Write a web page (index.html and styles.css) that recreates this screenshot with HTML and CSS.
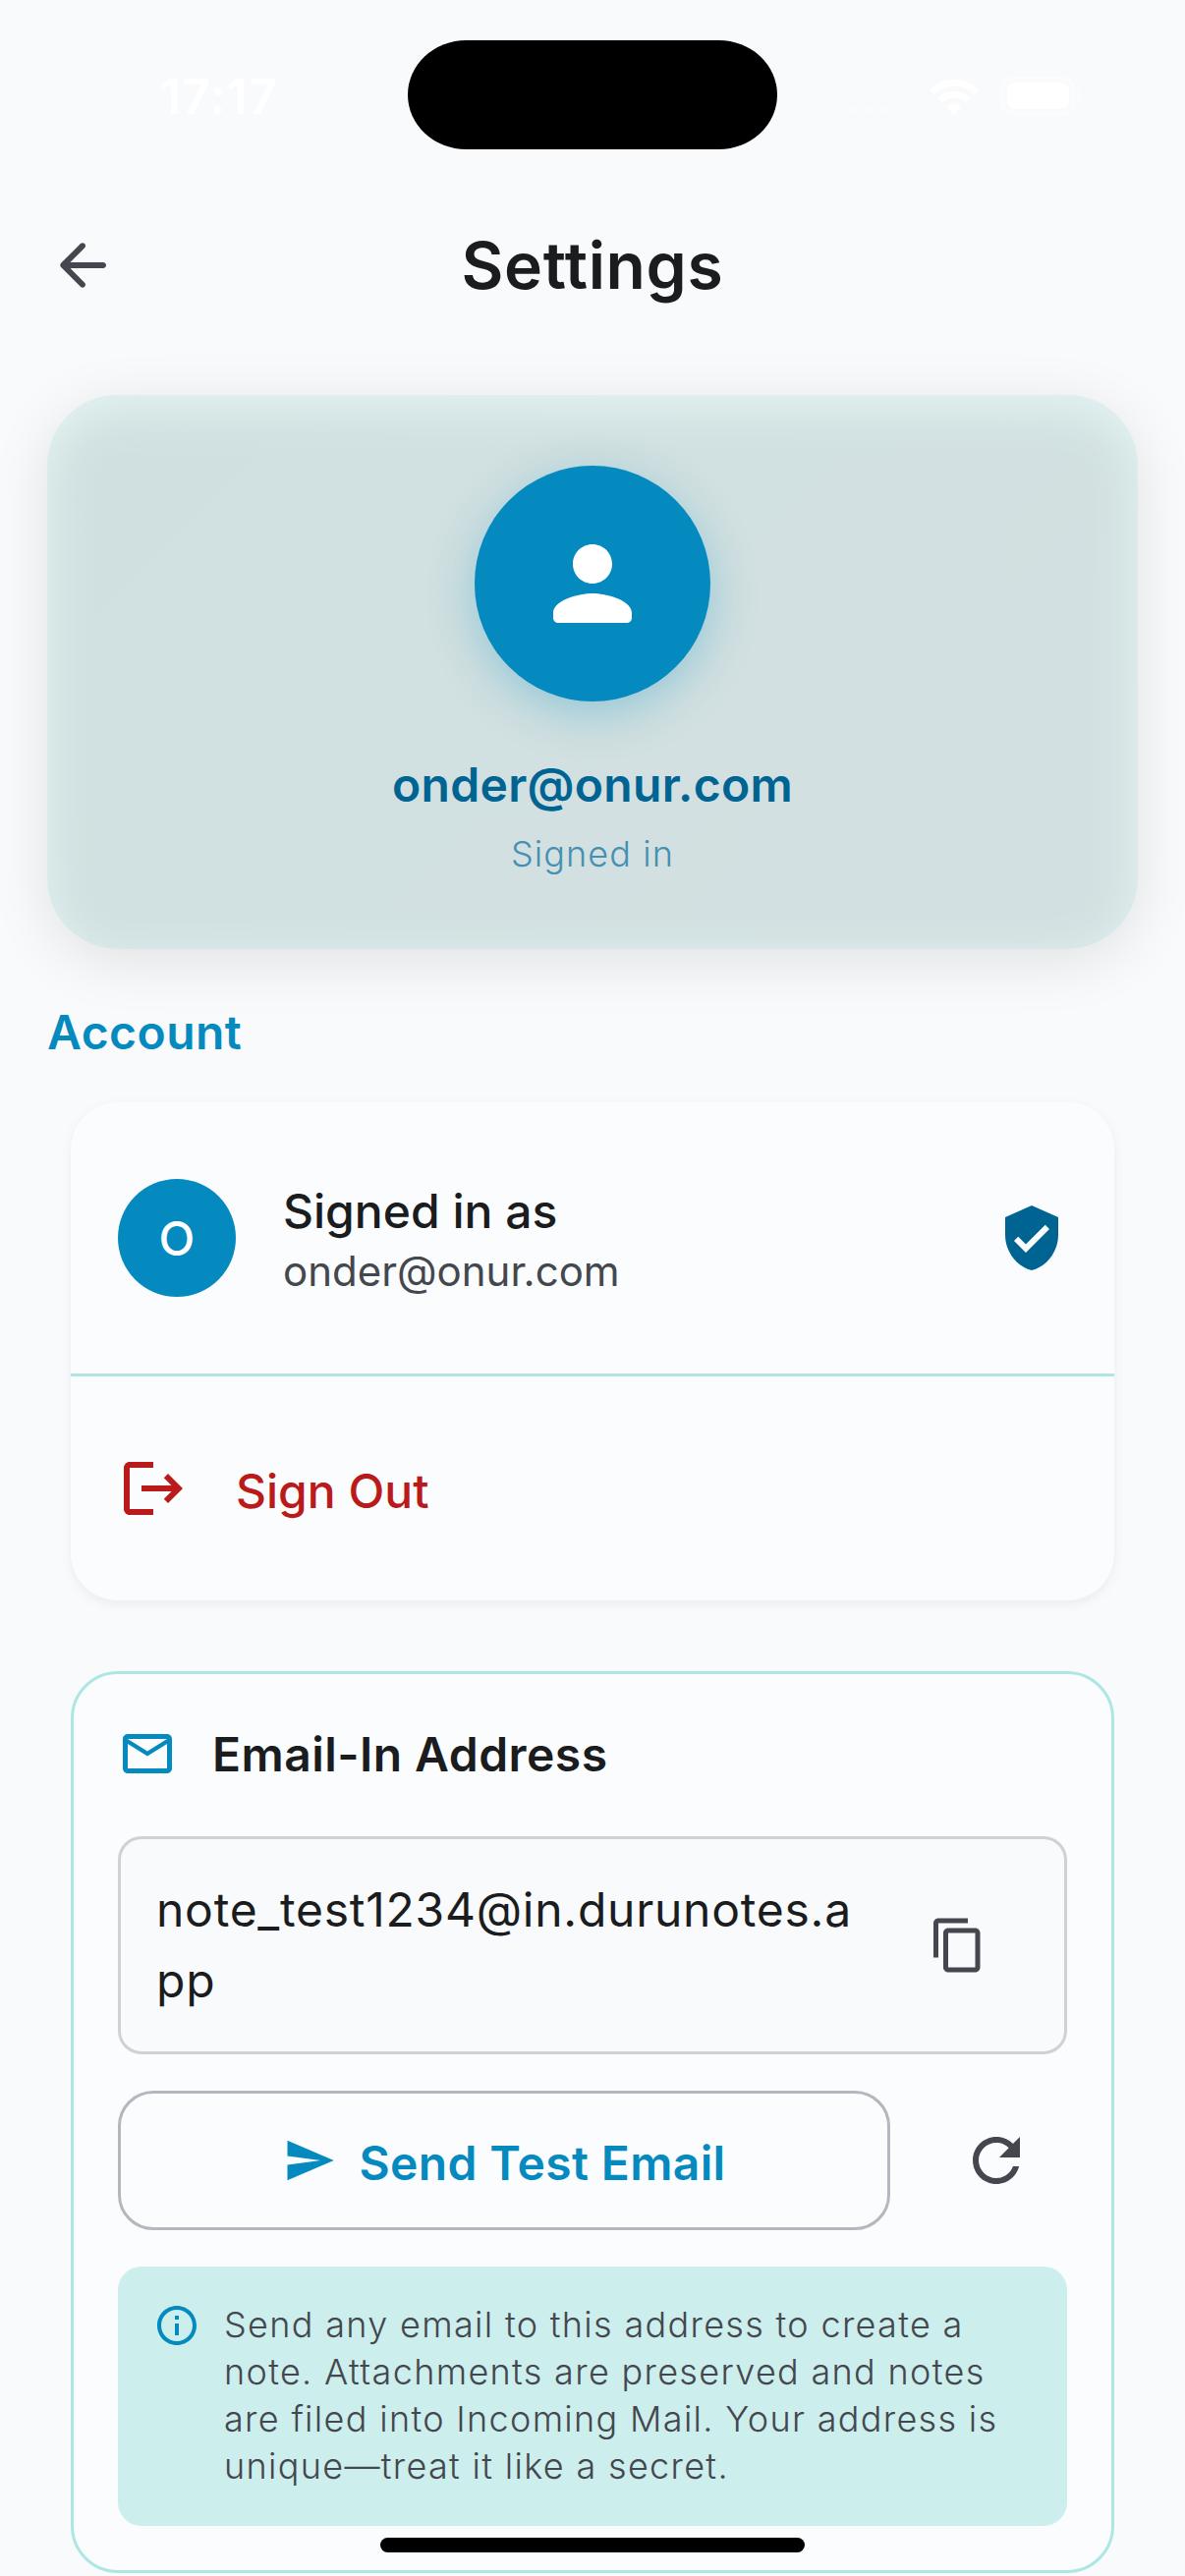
FILE: index.html
```html
<!DOCTYPE html>
<html lang="en">
<head>
<meta charset="utf-8">
<title>Settings</title>
<link rel="stylesheet" href="styles.css">
</head>
<body>
<div class="screen">
  <header class="status-bar">
    <span class="time">17:17</span>
    <span class="island"></span>
    <span class="indicators">
      <svg class="signal" viewBox="0 0 60 10"><circle cx="5" cy="5" r="4"/><circle cx="21" cy="5" r="4"/><circle cx="38" cy="5" r="4"/><circle cx="55" cy="5" r="4"/></svg>
      <svg class="wifi" viewBox="0 0 50 37"><path d="M25 37l-7.500-8c4-4 11-4 15 0z"/><path d="M8.500 19.500a23.500 23.500 0 0 1 33 0l-4.500 5a17 17 0 0 0-24 0z"/><path d="M0 11a35.500 35.500 0 0 1 50 0l-4.500 5a29 29 0 0 0-41 0z"/></svg>
      <svg class="battery" viewBox="0 0 82 39"><rect class="battery-outline" x="1.500" y="1.500" width="72" height="36" rx="11"/><rect x="6" y="6" width="63" height="27" rx="8"/><path class="battery-cap" d="M77 13q4 2 4 6.500t-4 6.500z"/></svg>
    </span>
  </header>

  <nav class="app-bar">
    <svg class="icon-24" viewBox="0 0 24 24"><path d="M19 11H7.830l4.880-4.880c.39-.39.39-1.030 0-1.420-.39-.39-1.020-.39-1.410 0l-6.590 6.590c-.39.39-.39 1.020 0 1.410l6.590 6.590c.39.39 1.020.39 1.410 0 .39-.39.39-1.020 0-1.410L7.830 13H19c.55 0 1-.45 1-1s-.45-1-1-1z"/></svg>
    <h1 class="app-title">Settings</h1>
  </nav>

  <main class="content">
    <section class="profile">
      <div class="profile-avatar">
        <svg class="icon-40" viewBox="0 0 24 24"><path d="M12 12c2.210 0 4-1.790 4-4s-1.790-4-4-4-4 1.790-4 4 1.790 4 4 4zm0 2c-2.670 0-8 1.340-8 4v1c0 .55.45 1 1 1h14c.55 0 1-.45 1-1v-1c0-2.660-5.330-4-8-4z"/></svg>
      </div>
      <div class="profile-email">onder@onur.com</div>
      <div class="profile-state">Signed in</div>
    </section>

    <h2 class="section-title">Account</h2>

    <section class="account-card">
      <div class="account-row">
        <span class="initial">O</span>
        <div class="account-text">
          <div class="account-label">Signed in as</div>
          <div class="account-email">onder@onur.com</div>
        </div>
        <svg class="icon-24 verified" viewBox="0 0 24 24"><path d="M12 1L3 5v6c0 5.550 3.840 10.740 9 12 5.160-1.260 9-6.450 9-12V5l-9-4zm-2 16l-4-4 1.410-1.410L10 14.170l6.590-6.590L18 9l-8 8z"/></svg>
      </div>
      <div class="account-row sign-out">
        <svg class="icon-24" viewBox="0 0 24 24"><path d="M17 7l-1.410 1.410L18.170 11H8v2h10.170l-2.580 2.580L17 17l5-5zM4 5h8V3H4c-1.100 0-2 .9-2 2v14c0 1.100.9 2 2 2h8v-2H4V5z"/></svg>
        <span class="sign-out-label">Sign Out</span>
      </div>
    </section>

    <section class="inbox-card">
      <div class="inbox-head">
        <svg class="icon-20" viewBox="0 0 24 24"><path d="M22 6c0-1.100-.9-2-2-2H4c-1.100 0-2 .9-2 2v12c0 1.100.9 2 2 2h16c1.100 0 2-.9 2-2V6zm-2 0l-8 5-8-5h16zm0 12H4V8l8 5 8-5v10z"/></svg>
        <h3 class="inbox-title">Email-In Address</h3>
      </div>
      <div class="address-box">
        <span class="address">note_test1234@in.durunotes.app</span>
        <span class="icon-button">
          <svg class="icon-20" viewBox="0 0 24 24"><path d="M16 1H4c-1.100 0-2 .9-2 2v14h2V3h12V1zm3 4H8c-1.100 0-2 .9-2 2v14c0 1.100.9 2 2 2h11c1.100 0 2-.9 2-2V7c0-1.100-.9-2-2-2zm0 16H8V7h11v14z"/></svg>
        </span>
      </div>
      <div class="actions">
        <div class="send-button">
          <svg class="icon-18" viewBox="0 0 24 24"><path d="M2.010 21L23 12 2.010 3 2 10l15 2-15 2z"/></svg>
          <span class="send-label">Send Test Email</span>
        </div>
        <span class="icon-button">
          <svg class="icon-24" viewBox="0 0 24 24"><path d="M17.650 6.350C16.200 4.900 14.210 4 12 4c-4.420 0-7.990 3.580-7.990 8s3.570 8 7.990 8c3.730 0 6.840-2.550 7.730-6h-2.080c-.82 2.330-3.040 4-5.650 4-3.310 0-6-2.690-6-6s2.690-6 6-6c1.660 0 3.140.69 4.220 1.780L13 11h7V4l-2.350 2.350z"/></svg>
        </span>
      </div>
      <div class="note">
        <svg class="icon-16" viewBox="0 0 24 24"><path d="M11 7h2v2h-2zm0 4h2v6h-2zm1-9C6.480 2 2 6.480 2 12s4.480 10 10 10 10-4.480 10-10S17.520 2 12 2zm0 18c-4.410 0-8-3.590-8-8s3.590-8 8-8 8 3.590 8 8-3.590 8-8 8z"/></svg>
        <p class="note-text">Send any email to this address to create a note. Attachments are preserved and notes are filed into Incoming Mail. Your address is unique—treat it like a secret.</p>
      </div>
    </section>
  </main>
  <span class="home-indicator"></span>
</div>
</body>
</html>
```
FILE: styles.css
```css
* { box-sizing: border-box; }

body {
  margin: 0;
  background: #f9fafc;
  color: #1a1c1e;
  font-family: Inter, "Liberation Sans", sans-serif;
  font-size: 48px;
  line-height: 72px;
}

h1, h2, h3, p { margin: 0; }

svg { display: block; flex: none; fill: currentColor; }

.screen {
  position: relative;
  width: 1206px;
  height: 2622px;
  overflow: hidden;
}

.icon-16 { width: 48px; height: 48px; }
.icon-18 { width: 54px; height: 54px; }
.icon-20 { width: 60px; height: 60px; }
.icon-24 { width: 72px; height: 72px; }
.icon-40 { width: 120px; height: 120px; }

/* Status bar */
.status-bar {
  display: grid;
  grid-template-columns: 415px 376px 415px;
  height: 186px;
  padding-top: 41px;
  color: #fff;
}
.time {
  padding: 21px 0 0 163px;
  font-size: 50px;
  font-weight: 600;
  letter-spacing: 1.2px;
}
.island {
  height: 111px;
  border-radius: 60px / 56px;
  background: #000;
}
.indicators {
  display: flex;
  align-items: flex-end;
  gap: 23px;
  height: 76px;
  padding-left: 72px;
}
.signal { width: 60px; height: 10px; opacity: .25; }
.wifi { width: 50px; height: 37px; }
.battery { width: 82px; height: 39px; }
.battery-outline { fill: none; stroke: #fff; stroke-width: 3px; opacity: .4; }
.battery-cap { opacity: .4; }

/* App bar */
.app-bar {
  display: grid;
  grid-template-columns: 72px 1fr 72px;
  align-items: center;
  height: 168px;
  padding: 0 48px;
  color: #44474e;
}
.app-title {
  color: #1a1c1e;
  font-size: 66px;
  font-weight: 600;
  letter-spacing: .65px;
  text-align: center;
}

.content { padding: 48px 48px 0; }

/* Profile */
.profile {
  display: flex;
  flex-direction: column;
  align-items: center;
  height: 564px;
  padding-top: 72px;
  border-radius: 72px;
  background: linear-gradient(135deg, #d0e0e0, #d3e0e1);
  box-shadow: 0 12px 60px rgba(0, 0, 0, .1), inset 0 12px 48px #e4f4f3;
}
.profile-avatar {
  display: grid;
  place-items: center;
  width: 240px;
  height: 240px;
  margin-bottom: 48px;
  border-radius: 50%;
  background: #048abf;
  box-shadow: 0 12px 48px rgba(4, 138, 191, .3);
  color: #fff;
}
.profile-email {
  padding-top: 2px;
  color: #006493;
  font-weight: 600;
  line-height: 70px;
  letter-spacing: .3px;
}
.profile-state {
  margin-top: 11px;
  color: #4590b2;
  font-size: 36px;
  font-weight: 300;
  line-height: 48px;
  letter-spacing: 1.1px;
}

.section-title {
  margin: 48px 0 36px;
  padding-top: 2px;
  color: #048abf;
  font-size: 48px;
  font-weight: 600;
  line-height: 70px;
  letter-spacing: .45px;
}

/* Account card */
.account-card {
  margin: 0 24px 72px;
  border-radius: 48px;
  background: #fbfcfe;
  box-shadow: 0 4px 12px rgba(0, 80, 120, .07);
}
.account-row {
  display: flex;
  align-items: center;
  gap: 48px;
  height: 276px;
  padding: 0 48px;
}
.initial {
  display: grid;
  place-items: center;
  width: 120px;
  height: 120px;
  padding-top: 1px;
  border-radius: 50%;
  background: #048abf;
  color: #fff;
  font-weight: 500;
}
.account-text {
  flex: 1;
  padding-top: 6px;
  line-height: 60px;
}
.account-label {
  margin-bottom: 1px;
  font-weight: 500;
}
.account-email {
  color: #44474e;
  font-size: 42px;
}
.verified { color: #006493; }
.sign-out {
  height: 231px;
  border-top: 3px solid #aee6e4;
  color: #ba1a1a;
}
.sign-out-label {
  padding-top: 5px;
  font-weight: 500;
}

/* Email-in card */
.inbox-card {
  margin: 0 24px;
  padding: 45px;
  border: 3px solid #aee6e4;
  border-radius: 48px;
  background: #fbfcfe;
}
.inbox-head {
  display: flex;
  align-items: center;
  gap: 36px;
  margin-bottom: 48px;
  color: #048abf;
}
.inbox-title {
  padding-top: 2px;
  color: #1a1c1e;
  font-size: 48px;
  font-weight: 600;
  line-height: 70px;
  letter-spacing: .45px;
}
.address-box {
  display: flex;
  align-items: center;
  padding: 36px;
  border: 3px solid #d0d1d3;
  border-radius: 24px;
  background: #f9fafc;
}
.address {
  flex: 1;
  letter-spacing: .75px;
  word-break: break-all;
}
.icon-button {
  display: grid;
  place-items: center;
  width: 144px;
  height: 144px;
  color: #44474e;
}
.address-box .icon-button { margin-left: 24px; }
.actions {
  display: flex;
  align-items: center;
  gap: 36px;
  margin: 36px 0;
}
.send-button {
  display: flex;
  flex: 1;
  align-items: center;
  justify-content: center;
  gap: 24px;
  height: 142px;
  border: 3px solid #b6b7be;
  border-radius: 36px;
  color: #048abf;
}
.send-label {
  padding-top: 5px;
  font-weight: 600;
  letter-spacing: .35px;
}
.note {
  display: flex;
  gap: 24px;
  padding: 36px;
  border-radius: 24px;
  background: #cceeec;
  color: #048abf;
}
.note-text {
  margin: -1px 0 1px;
  color: #44474e;
  font-size: 36px;
  font-weight: 300;
  line-height: 48px;
  letter-spacing: 1.32px;
}

.home-indicator {
  position: absolute;
  bottom: 24px;
  left: 387px;
  width: 432px;
  height: 15px;
  border-radius: 8px;
  background: #000;
}
```
